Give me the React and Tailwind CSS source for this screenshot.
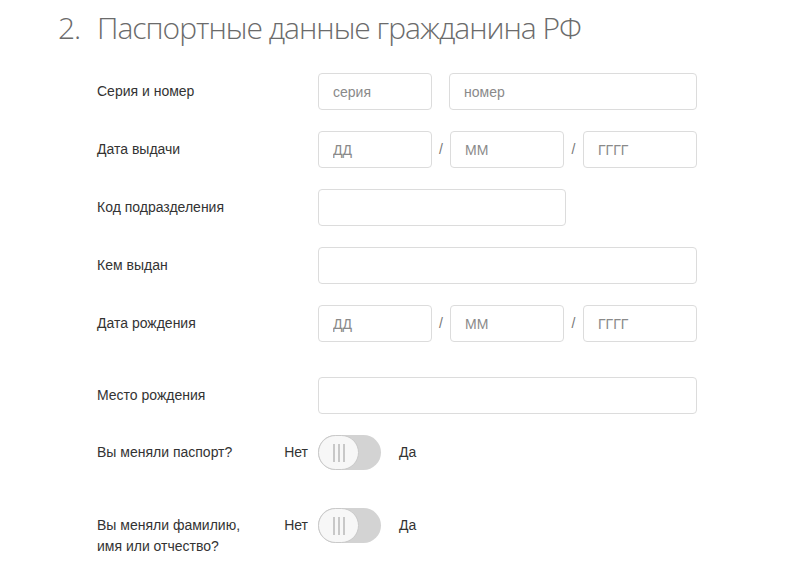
import React from 'react';

const FONT = { fontFamily: '"Liberation Sans", Arial, sans-serif' };

const Field = ({ placeholder = '', className = '' }) => (
  <input
    type="text"
    placeholder={placeholder}
    className={`h-[37px] rounded-[4px] border border-[#dcdcdc] bg-white px-[14px] text-[14px] text-[#333] placeholder:text-[#8a8a8a] outline-none ${className}`}
  />
);

const Slash = ({ width = 'w-[18px]' }) => (
  <span className={`flex ${width} justify-center text-[14px] text-[#777]`}>/</span>
);

const DateFields = () => (
  <div className="flex items-center">
    <Field placeholder="ДД" className="w-[114px]" />
    <Slash />
    <Field placeholder="ММ" className="w-[114px]" />
    <Slash width="w-[19px]" />
    <Field placeholder="ГГГГ" className="w-[114px]" />
  </div>
);

const Row = ({ label, children, className = '' }) => (
  <div className={`flex items-center ${className}`}>
    <div className="w-[221px] text-[14px] text-[#333]">{label}</div>
    {children}
  </div>
);

const Toggle = () => (
  <div className="flex h-[35px] w-[63px] items-center rounded-full bg-[#d3d3d3]">
    <div className="flex h-[35px] w-[41px] items-center justify-center gap-[3px] rounded-full border border-[#c9c9c9] bg-[#f7f7f7]">
      <span className="h-[18px] w-[2px] bg-[#c8c8c8]" />
      <span className="h-[18px] w-[2px] bg-[#c8c8c8]" />
      <span className="h-[18px] w-[2px] bg-[#c8c8c8]" />
    </div>
  </div>
);

const ToggleRow = ({ lines, className = '' }) => (
  <div className={`flex items-start ${className}`}>
    <div className="flex w-[221px] items-start justify-between pr-[10px] pt-[7px] text-[14px] leading-[21px] text-[#333]">
      <div>
        {lines.map((line) => (
          <div key={line}>{line}</div>
        ))}
      </div>
      <span>Нет</span>
    </div>
    <Toggle />
    <span className="ml-[18px] pt-[7px] text-[14px] leading-[21px] text-[#333]">Да</span>
  </div>
);

export default function App() {
  return (
    <div className="min-h-[581px] w-[801px] bg-white" style={FONT}>
      <h1
        className="flex pl-[58px] pt-[10px] text-[30px] font-light leading-[36px] tracking-[-1px] text-[#6b6b6b]"
        style={{ fontFamily: '"Open Sans", sans-serif' }}
      >
        <span className="w-[39px]">2.</span>
        <span>Паспортные данные гражданина РФ</span>
      </h1>

      <div className="flex flex-col pl-[97px] pt-[27px]">
        <Row label="Серия и номер">
          <Field placeholder="серия" className="w-[114px]" />
          <Field placeholder="номер" className="ml-[17px] w-[248px]" />
        </Row>

        <Row label="Дата выдачи" className="mt-[21px]">
          <DateFields />
        </Row>

        <Row label="Код подразделения" className="mt-[21px]">
          <Field className="w-[248px]" />
        </Row>

        <Row label="Кем выдан" className="mt-[21px]">
          <Field className="w-[379px]" />
        </Row>

        <Row label="Дата рождения" className="mt-[21px]">
          <DateFields />
        </Row>

        <Row label="Место рождения" className="mt-[35px]">
          <Field className="w-[379px]" />
        </Row>

        <ToggleRow lines={['Вы меняли паспорт?']} className="mt-[21px]" />

        <ToggleRow lines={['Вы меняли фамилию,', 'имя или отчество?']} className="mt-[38px]" />
      </div>
    </div>
  );
}
